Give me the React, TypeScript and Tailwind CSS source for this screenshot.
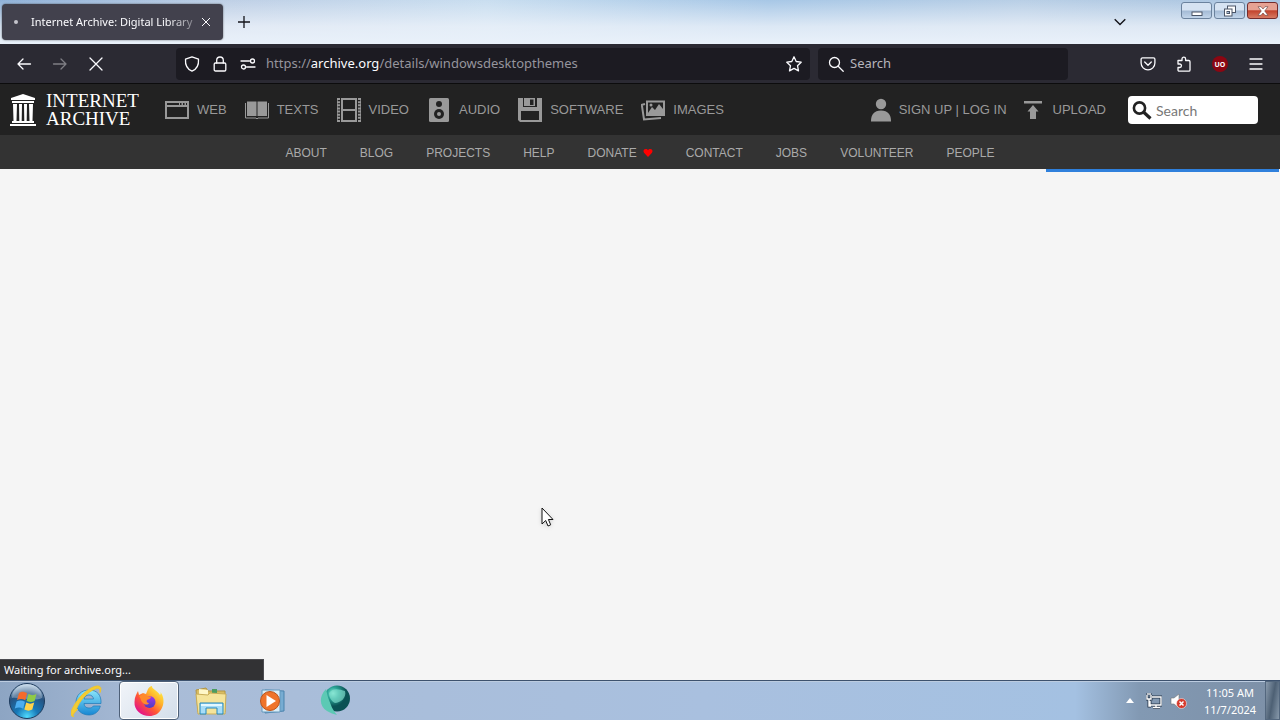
import React from "react";

const ui = "font-['Noto_Sans','Open_Sans',sans-serif]";
const toolIcon = "size-4 fill-none stroke-[#fbfbfe] [stroke-width:1.3] [stroke-linecap:round] [stroke-linejoin:round]";

function TabStrip() {
  return (
    <header className="flex h-11 shrink-0 items-start bg-[linear-gradient(90deg,#8fb1d8_0,#bfd0e6_18%,#c9def0_38%,#a7c7e6_60%,#b9cfe6_80%,#a9c4e0_100%)]">
      <div className="flex h-full w-full items-start bg-[linear-gradient(180deg,rgba(255,255,255,0)_0,rgba(238,243,250,0.75)_60%,#e9f1fa_100%)]">
        <div className="ml-0.5 mt-1 flex h-9 w-[221px] items-center rounded bg-[#42414d] text-[#fbfbfe] shadow-[0_0_2px_rgba(0,0,0,0.6)]">
          <span className="ml-3 size-1 rounded-full bg-[#c4c4cc]" />
          <span className="ml-[13px] w-[165px] whitespace-nowrap text-[11px] [mask-image:linear-gradient(90deg,#000_82%,rgba(0,0,0,0.3))]">
            Internet Archive: Digital Library
          </span>
          <button aria-label="Close tab" className="flex size-5 items-center justify-center">
            <svg viewBox="0 0 10 10" className="size-2.5 fill-none stroke-current"><path d="M1 1l8 8M9 1l-8 8" /></svg>
          </button>
        </div>
        <button aria-label="New tab" className="ml-[11px] mt-3 flex size-5 items-center justify-center">
          <svg viewBox="0 0 12 12" className="size-3 fill-none stroke-[#15141a] [stroke-width:1.3]"><path d="M6 0v12M0 6h12" /></svg>
        </button>
        <button aria-label="List all tabs" className="ml-auto mr-[51px] mt-3 flex size-5 items-center justify-center">
          <svg viewBox="0 0 12 8" className="h-2 w-3 fill-none stroke-[#15141a] [stroke-width:1.4]"><path d="M.7 1.2L6 6.5l5.300-5.300" /></svg>
        </button>
        <div className="mr-0.5 mt-0.5 flex gap-0.5">
          <button aria-label="Minimize" className="flex h-[17px] w-[31px] items-center justify-center rounded-[3px] border border-[#6b829d] bg-[linear-gradient(#d6e3f2_48%,#a3bad5_52%,#c2d5ea)]">
            <svg viewBox="0 0 12 12" className="size-3"><rect x="1" y="7" width="10" height="3.500" fill="#fff" stroke="#4a5567" /></svg>
          </button>
          <button aria-label="Restore" className="flex h-[17px] w-[31px] items-center justify-center rounded-[3px] border border-[#6b829d] bg-[linear-gradient(#d6e3f2_48%,#a3bad5_52%,#c2d5ea)]">
            <svg viewBox="0 0 14 12" className="h-3 w-3.5" fill="#fff" stroke="#4a5567"><rect x="4.500" y="1" width="8" height="6.500" /><rect x="1.500" y="4" width="7.500" height="7" /><rect x="4" y="6.500" width="2.500" height="2" fill="#a3bad5" /></svg>
          </button>
          <button aria-label="Close" className="flex h-[17px] w-[31px] items-center justify-center rounded-[3px] border border-[#742c2c] bg-[linear-gradient(#e6a293_45%,#c2432d_52%,#d77a63)]">
            <svg viewBox="0 0 12 10" className="h-2.5 w-3"><path d="M1 .7h3L6 3l2-2.300h3L7.700 5 11 9.300H8L6 7 4 9.300H1L4.300 5z" fill="#fff" stroke="#65403d" strokeWidth=".6" /></svg>
          </button>
        </div>
      </div>
    </header>
  );
}

function Toolbar() {
  return (
    <div className="flex h-10 shrink-0 items-center border-b border-[#0c0c0d] bg-[#2b2a33] pt-px text-[#fbfbfe]">
      <div className="flex w-44 shrink-0 items-center gap-5 pl-4">
        <button aria-label="Back"><svg viewBox="0 0 16 16" className={toolIcon}><path d="M14.500 8H2M7 3L2 8l5 5" /></svg></button>
        <button aria-label="Forward" className="opacity-40"><svg viewBox="0 0 16 16" className={toolIcon}><path d="M1.500 8H14M9 3l5 5-5 5" /></svg></button>
        <button aria-label="Stop"><svg viewBox="0 0 16 16" className={toolIcon}><path d="M2 2l12 12M14 2L2 14" /></svg></button>
      </div>
      <div className="flex h-8 min-w-0 grow basis-[634px] items-center rounded bg-[#1c1b22] px-2">
        <div className="flex shrink-0 gap-3">
          <svg viewBox="0 0 16 16" className={toolIcon}><path d="M8 .8l6.500 2.400c.4 5.300-1.500 9.800-6.500 12C3 13 1.100 8.500 1.500 3.200z" /></svg>
          <svg viewBox="0 0 16 16" className={toolIcon}><rect x="2.200" y="7" width="11.600" height="8" rx="1.200" /><path d="M4.700 7V4.300a3.300 3.300 0 016.600 0V7" /></svg>
          <svg viewBox="0 0 16 16" className={toolIcon}><path d="M1 5h8.500M6.500 11H15" /><circle cx="12.500" cy="5" r="2" /><circle cx="3.500" cy="11" r="2" /></svg>
        </div>
        <a href="#address" className="ml-2.5 truncate text-[13px] text-[#96959d]">
          https://<span className="text-[#fbfbfe]">archive.org</span>/details/windowsdesktopthemes
        </a>
        <button aria-label="Bookmark this page" className="ml-auto">
          <svg viewBox="0 0 16 16" className={toolIcon}><path d="M8 .8l2.200 4.700 5 .7-3.700 3.500 1 5.200L8 12.400l-4.500 2.500 1-5.200L.8 6.200l5-.7z" /></svg>
        </button>
      </div>
      <label className="ml-2 flex h-8 min-w-0 grow basis-[250px] items-center gap-1.5 rounded bg-[#1c1b22] pl-2.5">
        <svg viewBox="0 0 16 16" className={toolIcon + " shrink-0"}><circle cx="6.500" cy="6.500" r="5" /><path d="M10.200 10.200l5 5" /></svg>
        <input aria-label="Search the web" placeholder="Search" className="w-full min-w-0 bg-transparent text-[13px] outline-none placeholder:text-[#b6b5bc]" />
      </label>
      <div className="flex w-[212px] shrink-0 justify-end gap-5 pr-4">
        <button aria-label="Save to Pocket"><svg viewBox="0 0 16 16" className={toolIcon}><path d="M2.500 1.800h11c.8 0 1.400.5 1.400 1.400V7A6.900 6.900 0 011.100 7V3.200c0-.9.6-1.400 1.400-1.400zM4.700 6L8 9.200 11.300 6" /></svg></button>
        <button aria-label="Extensions"><svg viewBox="0 0 16 16" className={toolIcon}><path d="M2 4.500h4V3a1.800 1.800 0 013.600 0v1.500h3.200c.8 0 1.200.4 1.200 1.200V14c0 .7-.4 1.200-1.200 1.200H3.200c-.8 0-1.200-.5-1.200-1.200v-2.500h1.700a1.700 1.700 0 000-3.500H2z" /></svg></button>
        <button aria-label="uBlock Origin" className="flex size-4 items-center justify-center rounded-full bg-[#8b0612] text-[7px] font-bold leading-none">UO</button>
        <button aria-label="Application menu"><svg viewBox="0 0 16 16" className={toolIcon}><path d="M2 3h12M2 8h12M2 13h12" /></svg></button>
      </div>
    </div>
  );
}

const mediaIcons: Record<string, React.ReactNode> = {
  WEB: <><path d="M0 3h24v18H0zM2 9v10h20V9zM2 5v2h12V5zm13 0v2h1.500V5zm3 0v2h1.500V5zm3 0v2h1V5z" fillRule="evenodd" /></>,
  TEXTS: <><path d="M2 3.500h9.500V18H2zM12.500 3.500H22V18h-9.500z" /><path d="M.5 5v15H11l1 1 1-1h10.500V5" fill="none" stroke="currentColor" /></>,
  VIDEO: <><path d="M4 0h16v24H4zM6 2v9h12V2zm0 11v9h12v-9z" fillRule="evenodd" /><path d="M1.500 0v24M22.500 0v24" stroke="currentColor" strokeWidth="3" strokeDasharray="2 1.140" /><path d="M.5 0v24M23.500 0v24" stroke="currentColor" strokeWidth=".7" /></>,
  AUDIO: <><rect x="2" width="20" height="24" rx="1.500" /><circle cx="12" cy="6" r="3" fill="#222" /><circle cx="12" cy="16" r="5" fill="#222" /><circle cx="12" cy="16" r="2" /></>,
  SOFTWARE: <><path d="M0 0h24v24H2l-2-2zM5 0v9h14V0zM3 13v9h18v-9z" fillRule="evenodd" /><path d="M6 0h11v8H6z" /><path d="M12 1.500h3.500V7H12z" fill="#222" /></>,
  IMAGES: <><path d="M5 2.500h19V18H5zm2 2V16h15V4.500z" fillRule="evenodd" /><path d="M7 15l4-6 3 3 4-6 4 5v5H7z" /><circle cx="10" cy="7" r="1.500" /><path d="M4 6L.8 6.800 3 21.500 20 20" fill="none" stroke="currentColor" strokeWidth="2" /></>,
};

function ArchiveHeader() {
  return (
    <>
      <nav aria-label="Collections" className="flex h-[51px] shrink-0 items-center bg-[#222] pl-2.5 pr-[22px] pt-px font-['Liberation_Sans',sans-serif] text-[13px] text-[#999]">
        <a href="#home" className="flex items-center gap-2.5 text-white">
          <svg viewBox="0 0 26 32" className="h-8 w-[26px] fill-current"><path d="M13 0l12 4v2H1V4zM2 7h22v2H2zM3 10h4l-.5 17h-3zM9 10h3l-.3 17H9.300zM14 10h3l-.3 17h-2.400zM19 10h4l-.5 17h-3zM2 27h22v2H2zM0 30h26v2H0z" /></svg>
          <span className="flex w-[97px] flex-col font-['Liberation_Serif',serif] text-[19px] leading-[18px]"><span>INTERNET</span><span>ARCHIVE</span></span>
        </a>
        <div className="ml-[22px] flex gap-[18px]">
          {Object.entries(mediaIcons).map(([name, icon]) => (
            <a key={name} href={"#" + name.toLowerCase()} className="flex items-center gap-2">
              <svg viewBox="0 0 24 24" className="size-6 fill-current">{icon}</svg>{name}
            </a>
          ))}
        </div>
        <div className="ml-auto flex items-center gap-2">
          <svg viewBox="0 0 20 24" className="h-6 w-5 fill-current"><circle cx="10" cy="6" r="5.200" /><path d="M0 23.500c0-7 3-11 10-11s10 4 10 11z" /></svg>
          <span className="whitespace-nowrap"><a href="#signup">SIGN UP</a> | <a href="#login">LOG IN</a></span>
        </div>
        <a href="#upload" className="ml-4 flex items-center gap-2.5">
          <svg viewBox="0 0 20 20" className="size-5 fill-current"><path d="M1 1h18v2.500H1zM10 5l5.500 6.500H13V19H7v-7.500H4.500z" /></svg>UPLOAD
        </a>
        <label className="ml-[22px] flex h-7 w-[130px] items-center gap-1 rounded bg-white pl-1">
          <svg viewBox="0 0 20 20" className="size-5 shrink-0 fill-none stroke-[#222] [stroke-width:2.600]"><circle cx="7.500" cy="8" r="5.600" /><path d="M11.500 12l7 6.500" strokeWidth="3.200" /></svg>
          <input aria-label="Search the archive" placeholder="Search" className="w-full min-w-0 bg-transparent font-['Lato',sans-serif] text-[14px] outline-none placeholder:text-[#777]" />
        </label>
      </nav>
      <nav aria-label="Site" className="flex h-[34px] shrink-0 items-center justify-center gap-[33px] bg-[#333] pt-0.5 font-['Liberation_Sans',sans-serif] text-[12px] text-[#aaa]">
        {["ABOUT", "BLOG", "PROJECTS", "HELP", "DONATE", "CONTACT", "JOBS", "VOLUNTEER", "PEOPLE"].map((name) => (
          <a key={name} href={"#" + name.toLowerCase()} className="flex items-center gap-1.5">
            {name}
            {name === "DONATE" && <svg viewBox="0 0 12 10" className="h-2 w-2.5 fill-[#f00]"><path d="M6 10L1 4.600C-.6 2 1.200 0 3 0c1.500 0 2.500.7 3 1.500C6.500.7 7.500 0 9 0c1.800 0 3.600 2 2 4.600z" /></svg>}
          </a>
        ))}
      </nav>
    </>
  );
}

function Taskbar() {
  return (
    <footer className="flex h-10 shrink-0 items-center border-t border-[#3d526e] bg-[linear-gradient(90deg,#8da5c3_0,#a9bcd7_12%,#a9c0df_55%,#a4c1e2_84%,#8299b3_89%,#7d90a7_100%)] shadow-[inset_0_1px_0_#bccce0]">
      <button aria-label="Start" className="flex h-full w-[54px] items-center justify-center">
        <svg viewBox="0 0 38 38" className="size-[38px]">
          <defs>
            <radialGradient id="orb" cx=".5" cy=".95" r=".9"><stop offset="0" stopColor="#50dcff" /><stop offset=".35" stopColor="#1779b8" /><stop offset=".75" stopColor="#27527f" /><stop offset="1" stopColor="#a9c4dc" /></radialGradient>
          </defs>
          <circle cx="19" cy="19" r="17.500" fill="url(#orb)" stroke="#1d3b5d" />
          <path d="M4 16a15 14 0 0130 0c-8 4-22-1-30 0z" fill="#fff" opacity=".3" />
          <path d="M11 11c3-2 5-1.500 8 .2l-1.700 7c-3-1.700-5-1.700-8.300-.2z" fill="#f36b2c" />
          <path d="M20.500 12c3 1.500 5 1.500 8 0l-1.900 7c-3 1.500-5 1.300-8 0z" fill="#8fcb45" />
          <path d="M8.600 19.500c3-1.500 5.300-1.300 8.300.2l-1.700 7c-3-1.700-5.400-1.600-8.400-.1z" fill="#4caef0" />
          <path d="M18.200 20.500c3 1.500 5 1.500 8 .1l-1.900 7c-3 1.500-5 1.300-8-.1z" fill="#ffd34a" />
        </svg>
      </button>
      <button aria-label="Internet Explorer" className="flex h-full w-[65px] items-center justify-center">
        <svg viewBox="0 0 32 32" className="size-8">
          <defs><linearGradient id="ie" x2="0" y2="1"><stop stopColor="#8ce6fb" /><stop offset="1" stopColor="#1687d3" /></linearGradient></defs>
          <path d="M30 18.500H13c.2 3 2 4.500 5 4.500 2.200 0 3.500-.6 4.300-2h7C27.900 26.500 24 30 18 30 10.500 30 5 25 5 17.500S10.500 5 18 5c8.500 0 12.500 5.500 12 13.500zM13 14h9.500c-.3-2.500-2-4-4.600-4S13.400 11.500 13 14z" fill="url(#ie)" stroke="#1c78b7" strokeWidth=".7" />
          <path d="M7 24C2 29 .7 31 3 31.500c-4 .5-4-4-.5-10C7.500 12 18 2 26 1c3.500-.3 5 2 3 6.500.2-3.700-1-5-4.500-3.700C16 7 8 16.500 5.500 24c-.4 1.400.3 1.200 1.500 0z" fill="#f4cc32" stroke="#f0c52d" strokeWidth="1" />
        </svg>
      </button>
      <button aria-label="Firefox" className="flex h-full w-[60px] items-center justify-center rounded-sm border border-[#4e6078] bg-[linear-gradient(135deg,#f1f4f9,#d3deea)] shadow-[inset_0_0_0_1px_#fff]">
        <svg viewBox="0 0 32 32" className="size-8">
          <defs>
            <linearGradient id="fox" x1=".9" y1=".1" x2=".2" y2=".9"><stop stopColor="#fff044" /><stop offset=".35" stopColor="#ffb02b" /><stop offset=".65" stopColor="#ff5635" /><stop offset="1" stopColor="#e31587" /></linearGradient>
            <linearGradient id="globe" x2="0" y2="1"><stop stopColor="#a436e8" /><stop offset="1" stopColor="#4a3fc2" /></linearGradient>
          </defs>
          <path d="M5 6l1 4 4-2 3 1 2-5c1-2 3-3 4-3-.5 3 5 4 8 9 1-1 .7-2 .4-3 4 5 4 12 1 17-3 5-7 7-12 7C8 31 1 25 1.500 17c.1-5 2-8 3.500-11z" fill="url(#fox)" />
          <circle cx="16.500" cy="17" r="6" fill="url(#globe)" />
          <path d="M6 11c3-2 6-2 8 0 2 .7 4 0 4 1-.3 2-3 2-4 3-1 1.500 0 3 2 3-1 2-4 2-6 0-2-2-2-3-2.500-4.500C7 13 7 12 6 11z" fill="#ff8a2a" />
        </svg>
      </button>
      <button aria-label="Windows Explorer" className="flex h-full w-16 items-center justify-center">
        <svg viewBox="0 0 34 30" className="h-[30px] w-[34px]">
          <path d="M2 4l10-2 2 3h17v21H4z" fill="#d9bd62" stroke="#b29545" />
          <path d="M5 3l9 1v6H5z" fill="#fff7c8" /><path d="M18 3h5v4h-5z" fill="#4b9d60" />
          <path d="M2 8l12 1 2-2 16 1-1 20H4z" fill="#f5e49a" stroke="#c9ad58" />
          <path d="M6 28V17h23v11h-6v-6H12v6z" fill="#a7ddf7" stroke="#2587bd" /><path d="M7 19h21" stroke="#e3f8ff" strokeWidth="2" />
        </svg>
      </button>
      <button aria-label="Windows Media Player" className="flex h-full w-[58px] items-center justify-center">
        <svg viewBox="0 0 30 28" className="h-7 w-[30px]">
          <path d="M8 3l19 1v20L8 26z" fill="#77acd2" stroke="#4b83ad" /><path d="M5 3h18v22H5z" fill="#d9edf7" stroke="#6598bc" />
          <circle cx="13" cy="14" r="9.500" fill="#ef742b" stroke="#bb541c" /><path d="M9.500 8l9.500 6-9.500 6z" fill="#fff" />
        </svg>
      </button>
      <button aria-label="Desktop themes" className="flex h-full w-[68px] items-center justify-center">
        <svg viewBox="0 0 32 32" className="size-8">
          <defs><radialGradient id="orbGreen" cx=".35" cy=".3"><stop stopColor="#8ff0db" /><stop offset=".45" stopColor="#2ba496" /><stop offset="1" stopColor="#0a5254" /></radialGradient></defs>
          <circle cx="18" cy="13.500" r="13" fill="url(#orbGreen)" />
          <path d="M7 4c-7 7-7 17 1 22 3 2 7 3 10 4-5-6-6-10-8-15C8.500 11 8 8 7 4z" fill="#5cc9b4" /><path d="M10 8c5-6 11-3 16-2 2 7-5 12-10 12-4-2-6-6-6-10z" fill="#84e0cf" opacity=".65" />
        </svg>
      </button>
      <div className="ml-auto flex h-full items-center text-white">
        <button aria-label="Show hidden icons" className="mr-3"><svg viewBox="0 0 8 5" className="h-[5px] w-2 fill-white"><path d="M4 0l4 5H0z" /></svg></button>
        <svg viewBox="0 0 16 16" className="mr-2 size-4 fill-none stroke-white [stroke-width:1.400]"><path d="M6 4h9v8H4V8M7 14.500h7M10 12v2M1 2v4h4V2M2 0v2M4 0v2M3 6v7h2" stroke="#27374b" strokeWidth="3" /><path d="M6 4h9v8H4V8M7 14.500h7M10 12v2M1 2v4h4V2M2 0v2M4 0v2M3 6v7h2" /></svg>
        <svg viewBox="0 0 17 16" className="mr-2.5 h-4 w-[17px]"><path d="M1 5h3l5-4v14l-5-4H1z" fill="#fff" stroke="#777" strokeWidth=".6" /><circle cx="11.500" cy="10.500" r="5" fill="#d63a2c" stroke="#fff" strokeWidth=".5" /><path d="M9.500 8.500l4 4m0-4l-4 4" stroke="#fff" strokeWidth="1.500" /></svg>
        <button className="w-[66px] text-center text-[11px] leading-[17px]"><span className="block">11:05 AM</span><span className="block">11/7/2024</span></button>
        <button aria-label="Show desktop" className="ml-0.5 h-full w-[15px] border border-[#53677e] bg-[linear-gradient(100deg,#8a9bad,#4d6074_50%,#8799ab)]" />
      </div>
    </footer>
  );
}

export default function App() {
  return (
    <div className={"flex h-screen flex-col overflow-hidden bg-[#f5f5f5] " + ui}>
      <TabStrip />
      <Toolbar />
      <ArchiveHeader />
      <main className="relative flex flex-1 flex-col items-end justify-between">
        <div role="progressbar" aria-label="Page loading" className="mr-px h-[3px] w-[233px] bg-[#2f80dc]" />
        <div role="status" className="flex h-[21px] w-[264px] items-center self-start border-r border-t border-[#4b4b50] bg-[#323234] pl-1 text-[11px] text-[#fbfbfe]">Waiting for archive.org...</div>
        <svg viewBox="0 0 14 20" className="absolute left-[541px] top-[338px] h-5 w-3.5 drop-shadow-sm"><path d="M1 1v16l3.700-3.500L7 19l2.700-1.200-2.300-5.300H12z" fill="#fff" stroke="#111" /></svg>
      </main>
      <Taskbar />
    </div>
  );
}
